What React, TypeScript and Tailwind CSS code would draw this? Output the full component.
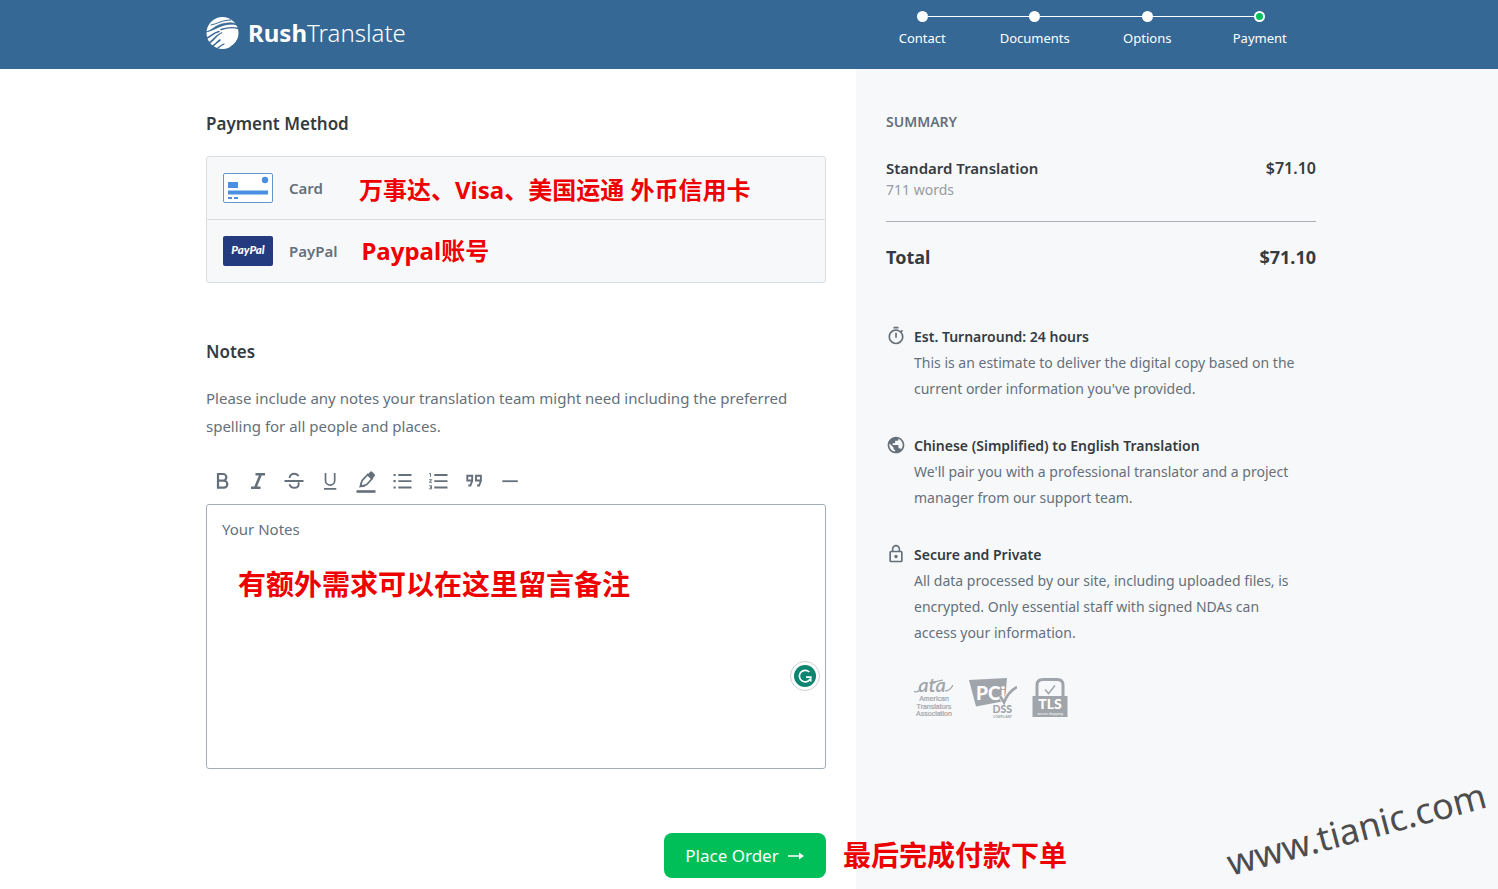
import type { ReactNode } from "react";
import { MdLockOutline, MdOutlineTimer, MdPublic } from "react-icons/md";

const STEPS = ["Contact", "Documents", "Options", "Payment"];

const FEATURES = [
  {
    icon: MdOutlineTimer,
    title: "Est. Turnaround: 24 hours",
    text: "This is an estimate to deliver the digital copy based on the current order information you've provided.",
  },
  {
    icon: MdPublic,
    title: "Chinese (Simplified) to English Translation",
    text: "We'll pair you with a professional translator and a project manager from our support team.",
  },
  {
    icon: MdLockOutline,
    title: "Secure and Private",
    text: "All data processed by our site, including uploaded files, is encrypted. Only essential staff with signed NDAs can access your information.",
  },
];

const TOOLS: { label: string; icon: ReactNode }[] = [
  {
    label: "Bold",
    icon: <path d="M8 5h5a3.3 3.3 0 0 1 0 6.7H8zM8 11.7h5.800a3.500 3.500 0 0 1 0 7H8z" strokeWidth="2.200" />,
  },
  {
    label: "Italic",
    icon: <path d="M9.500 5.200H19M5 18.700h9.500M14.800 5.200 9.200 18.700" strokeWidth="2.600" />,
  },
  {
    label: "Strikethrough",
    icon: (
      <path
        d="M2.500 12h19M7.600 9c0-2.600 2-4.200 4.600-4.200 2 0 3.500.8 4.200 2.400M7.500 15.300c.6 2.200 2.300 3.500 4.700 3.500 2.600 0 4.500-1.300 4.500-3.500 0-.8-.2-1.400-.6-1.900"
        strokeWidth="1.900"
      />
    ),
  },
  {
    label: "Underline",
    icon: <path d="M7.500 4v7.500a4.600 4.600 0 0 0 9.200 0V4M6 19.800h12.300" strokeWidth="1.700" />,
  },
  {
    label: "Highlight",
    icon: (
      <>
        <path d="M2.500 22.500h19" strokeWidth="2.600" />
        <path d="M5 18.500 7 13l4.500 4.500z" fill="currentColor" stroke="none" />
        <path d="m8.300 11.300 5.500-5.900 4.400 4.200-5.500 5.900-4.300 1.600-1.600-1.600z" fill="white" strokeWidth="1.700" />
        <path d="m13 6.200 3.200-3.400a1.400 1.400 0 0 1 2 0l2.400 2.400a1.400 1.400 0 0 1 0 2L17.500 10.500z" fill="currentColor" stroke="none" />
      </>
    ),
  },
  {
    label: "Bulleted list",
    icon: (
      <>
        <path d="M8.300 6h13.200M8.300 12.200h13.200M8.300 18.500h13.200" strokeWidth="1.800" />
        <path d="M3.500 6h2.200M3.500 12.200h2.200M3.500 18.500h2.200" strokeWidth="2.200" />
      </>
    ),
  },
  {
    label: "Numbered list",
    icon: (
      <>
        <path d="M8.300 6h13.200M8.300 12.200h13.200M8.300 18.500h13.200" strokeWidth="1.800" />
        <path d="M3.200 4.500h1.300v3.300M3.200 10.700h2.500l-2.300 2.600h2.500M3.200 16.800h2.300v3H3.200M4 18.300h1.500" strokeWidth="1" />
      </>
    ),
  },
  {
    label: "Quote",
    icon: (
      <path
        d="M10.200 11.500H5.300V6.700h4.900v5.200L8.400 16.500H6.300M18.900 11.500H14V6.700h4.900v5.200l-1.800 4.600H15"
        strokeWidth="1.900"
      />
    ),
  },
  { label: "Horizontal line", icon: <path d="M4.300 12.200h15.500" strokeWidth="1.800" /> },
];

export default function App() {
  return (
    <div className="relative flex min-h-screen flex-col overflow-x-hidden bg-white font-['Noto_Sans','Noto_Sans_CJK_SC',sans-serif] text-[15px] text-[#65707b]">
      <Header />
      <main className="grid flex-1 grid-cols-[4fr_3fr]">
        <div className="flex justify-end pr-[30px] pb-[11px] pl-6">
          <div className="w-full max-w-[620px]">
            <PaymentMethod />
            <Notes />
          </div>
        </div>
        <Summary />
      </main>
      <div className="pointer-events-none absolute right-2 bottom-10 -rotate-[15deg] font-['Noto_Sans'] text-[36px] leading-10 text-[#4d4d4d]">
        www.tianic.com
      </div>
    </div>
  );
}

function Annotation({ large, children }: { large?: boolean; children: ReactNode }) {
  return (
    <span
      className={
        large
          ? "text-[28px] leading-8 font-bold whitespace-nowrap text-[#ee0000]"
          : "text-2xl font-bold whitespace-nowrap text-[#ee0000]"
      }
    >
      {children}
    </span>
  );
}

function Header() {
  return (
    <header className="grid grid-cols-[4fr_3fr] bg-[#366895] text-white">
      <div className="flex justify-end pr-[30px] pl-6">
        <a href="#" className="flex h-[69px] w-full max-w-[620px] items-center gap-2 pb-[3px]">
          <Globe />
          <span className="text-2xl leading-9">
            <span className="font-bold">Rush</span>
            <span className="font-light">Translate</span>
          </span>
        </a>
      </div>
      <ol className="ml-[10px] grid max-w-[450px] grid-cols-4 pt-[11px]">
        {STEPS.map((step, i) => (
          <li key={step} className="flex flex-col items-center text-[13px]">
            <div className="flex w-full items-center">
              <span className={i === 0 ? "h-px flex-1" : "h-px flex-1 bg-white"} />
              <span
                className={
                  i === STEPS.length - 1
                    ? "size-[11px] rounded-full border-2 border-white bg-[#00bf58]"
                    : "size-[11px] rounded-full bg-white"
                }
              />
              <span className={i === STEPS.length - 1 ? "h-px flex-1" : "h-px flex-1 bg-white"} />
            </div>
            <span className="mt-1.5 leading-5">{step}</span>
          </li>
        ))}
      </ol>
    </header>
  );
}

function Globe() {
  return (
    <svg viewBox="0 0 34 34" className="size-[34px]" fill="#366895" stroke="#366895" strokeLinecap="round">
      <circle cx="16.500" cy="17" r="16" fill="white" stroke="none" />
      <path d="M5 9C11 8 16 4 25 4" fill="none" strokeWidth="1" />
      <path d="M0 16C7 14 9 9 18 7.500c6-1 10-1.500 15 2.500-5-2.500-9-2-14-1C11 11 8 14.500 0 16z" strokeWidth="0.700" />
      <path d="M15 13.500c6-2 12-2.500 17.500-1" fill="none" strokeWidth="1.400" />
      <path d="M1 22c4-1.500 6-5 12-6.500" fill="none" strokeWidth="1.500" />
      <path d="M2 27c5-3 7-7.500 14-10.500C10 20 8 25 3 28z" strokeWidth="0.700" />
      <path d="M6 30.500c3-1.500 5-4.500 8-6.500" fill="none" strokeWidth="1.600" />
      <path d="M10 33c3-1.500 5-4 8-5" fill="none" strokeWidth="1.300" />
      <path d="M25 30.500c3-1.500 5-4 7-7.500" fill="none" strokeWidth="1" />
    </svg>
  );
}

function PaymentMethod() {
  return (
    <section className="pt-[41px]">
      <h2 className="text-[17px] leading-7 font-semibold text-[#343b41]">Payment Method</h2>
      <div className="mt-[18px] divide-y divide-[#dadde0] rounded-[3px] border border-[#dadde0] bg-[#f7f8fa]">
        <div className="flex h-[63px] items-center gap-6 pl-4">
          <button type="button" className="flex items-center gap-4 font-semibold">
            <CardIcon />
            Card
          </button>
          <div className="ml-3 pt-1">
            <Annotation>万事达、Visa、美国运通 外币信用卡</Annotation>
          </div>
        </div>
        <div className="flex h-[62px] items-center gap-6 pl-4">
          <button type="button" className="flex items-center gap-4 font-semibold">
            <PayPalIcon />
            PayPal
          </button>
          <Annotation>Paypal账号</Annotation>
        </div>
      </div>
    </section>
  );
}

function CardIcon() {
  return (
    <svg viewBox="0 0 50 30" className="h-[30px] w-[50px]" fill="#4a90e2">
      <rect x="0.500" y="0.500" width="49" height="29" rx="1.500" fill="white" stroke="#6596d0" />
      <rect x="5" y="9" width="10" height="6" />
      <circle cx="42" cy="7" r="3.200" />
      <rect x="5" y="17.500" width="40" height="4" />
      <rect x="5" y="24" width="4" height="2" />
      <rect x="11" y="24" width="4" height="2" />
    </svg>
  );
}

function PayPalIcon() {
  return (
    <svg viewBox="0 0 50 30" className="h-[30px] w-[50px]">
      <rect width="50" height="30" rx="2" fill="#253b80" />
      <text x="25" y="18" textAnchor="middle" fontFamily="Lato" fontSize="11.500" fontWeight="900" fontStyle="italic" fill="white">
        PayPal
      </text>
    </svg>
  );
}

function Notes() {
  return (
    <section className="pt-[55px]">
      <h2 className="text-[17px] leading-7 font-semibold text-[#343b41]">
        <label htmlFor="notes">Notes</label>
      </h2>
      <p className="mt-[18px] leading-7">
        Please include any notes your translation team might need including the preferred spelling for all people and
        places.
      </p>
      <div className="mt-[23px] -ml-0.5 flex">
        {TOOLS.map(({ label, icon }) => (
          <button key={label} type="button" aria-label={label} className="flex size-9 items-center justify-center">
            <svg viewBox="0 0 24 24" className="size-6" fill="none" stroke="currentColor">
              {icon}
            </svg>
          </button>
        ))}
      </div>
      <div className="relative mt-[5px]">
        <textarea
          id="notes"
          placeholder="Your Notes"
          className="block h-[265px] w-full resize-none rounded-[3px] border border-[#a5adb4] px-[15px] py-3 leading-6 placeholder:text-[#65707b]"
        />
        <div className="pointer-events-none absolute top-16 left-8">
          <Annotation large>有额外需求可以在这里留言备注</Annotation>
        </div>
        <button
          type="button"
          aria-label="Grammarly"
          className="absolute right-1.5 bottom-[78px] flex size-[30px] items-center justify-center rounded-full border border-[#cfcfd4] bg-white"
        >
          <svg viewBox="0 0 22 22" className="size-[22px]" fill="none" stroke="white" strokeWidth="1.700">
            <circle cx="11" cy="11" r="11" fill="#0c8671" stroke="none" />
            <path d="M15.300 7a5.800 5.800 0 1 0 .7 7.300M12 12.200h4.700v4.300" />
          </svg>
        </button>
      </div>
      <div className="mt-16 flex justify-end">
        <div className="relative">
          <button
            type="button"
            className="flex h-[45px] w-[162px] items-center justify-center gap-2 rounded-lg bg-[#00bf58] text-[17px] text-white"
          >
            Place Order
            <svg viewBox="0 0 18 10" className="h-[10px] w-[18px]" fill="white">
              <path d="M1 4.200h11V1.500L17 5l-5 3.500V5.800H1z" />
            </svg>
          </button>
          <div className="absolute top-1.5 left-full z-10 ml-[17px]">
            <Annotation large>最后完成付款下单</Annotation>
          </div>
        </div>
      </div>
    </section>
  );
}

function Summary() {
  return (
    <aside className="bg-[#f7f8fa] pt-[43px] pr-6 pl-[30px]">
      <div className="max-w-[430px]">
        <h2 className="text-sm leading-5 font-semibold">SUMMARY</h2>
        <div className="mt-6 border-b border-[#a9afb5] pb-[21px]">
          <div className="flex justify-between leading-6 font-semibold text-[#343b41]">
            <span>Standard Translation</span>
            <span className="text-base leading-6">$71.10</span>
          </div>
          <p className="text-sm leading-5 text-[#969ca2]">711 words</p>
        </div>
        <div className="mt-[23px] flex justify-between text-lg leading-6 font-bold text-[#343b41]">
          <span>Total</span>
          <span>$71.10</span>
        </div>
        <ul className="mt-[55px] space-y-[31px]">
          {FEATURES.map(({ icon: Icon, title, text }) => (
            <li key={title} className="flex gap-2 pr-3 text-sm leading-[26px]">
              <Icon className="mt-[2px] size-5 shrink-0" />
              <div>
                <h3 className="font-semibold text-[#343b41]">{title}</h3>
                <p>{text}</p>
              </div>
            </li>
          ))}
        </ul>
        <div className="mt-[26px] ml-7 flex items-end gap-[15px]">
          <AtaBadge />
          <PciBadge />
          <TlsBadge />
        </div>
      </div>
    </aside>
  );
}

function AtaBadge() {
  return (
    <svg viewBox="0 -6 40 46" className="h-[46px] w-10" fill="#9fa5aa" fontFamily="Liberation Sans" fontSize="7">
      <text x="18" y="14" textAnchor="middle" fontFamily="Lato" fontSize="20" fontStyle="italic" fontWeight="600">
        ata
      </text>
      <path d="M0 13c1 1.500 4 1 6-1M16 4.500c5-.5 9-1.500 13-2.500M31 13c3 0 6-2 8-6" fill="none" stroke="#9fa5aa" strokeWidth="1.200" />
      <g stroke="#9fa5aa" strokeWidth="0.200">
        <text x="20" y="23" textAnchor="middle">American</text>
        <text x="20" y="30.500" textAnchor="middle">Translators</text>
        <text x="20" y="38" textAnchor="middle">Association</text>
      </g>
    </svg>
  );
}

function PciBadge() {
  return (
    <svg viewBox="0 0 48 40" className="h-10 w-12" fill="#9fa5aa" fontFamily="Lato" fontWeight="900">
      <path d="M0 2 38 0l-2 23-29 5.500z" />
      <text x="7" y="21.500" fontSize="19" fill="white">PCi</text>
      <path d="m31 18 4 6.500Q39 14 48 9" fill="none" stroke="#f7f8fa" strokeWidth="4" />
      <path d="m31 18 4 6.500Q39 14 48 9" fill="none" stroke="#9fa5aa" strokeWidth="2.600" />
      <text x="23.500" y="34.500" fontSize="10.500">DSS</text>
      <text x="24" y="39.500" fontSize="3.200" fontFamily="Liberation Sans">COMPLIANT</text>
    </svg>
  );
}

function TlsBadge() {
  return (
    <svg viewBox="0 0 36 40" className="h-10 w-9" fill="#9fa5aa" fontFamily="Lato">
      <path d="M5 20V7q0-5.500 6-5.500h14q6 0 6 5.500v13" fill="none" stroke="#9fa5aa" strokeWidth="3" />
      <rect x="0.500" y="18" width="35" height="21" />
      <path d="m13 11.500 3.500 4 6.500-8" fill="none" stroke="#9fa5aa" strokeWidth="1.500" />
      <text x="18" y="31" textAnchor="middle" fontSize="14" fontWeight="900" fill="white">TLS</text>
      <text x="18" y="37" textAnchor="middle" fontSize="3.500" fontFamily="Liberation Sans" fill="white">secure shopping</text>
    </svg>
  );
}
